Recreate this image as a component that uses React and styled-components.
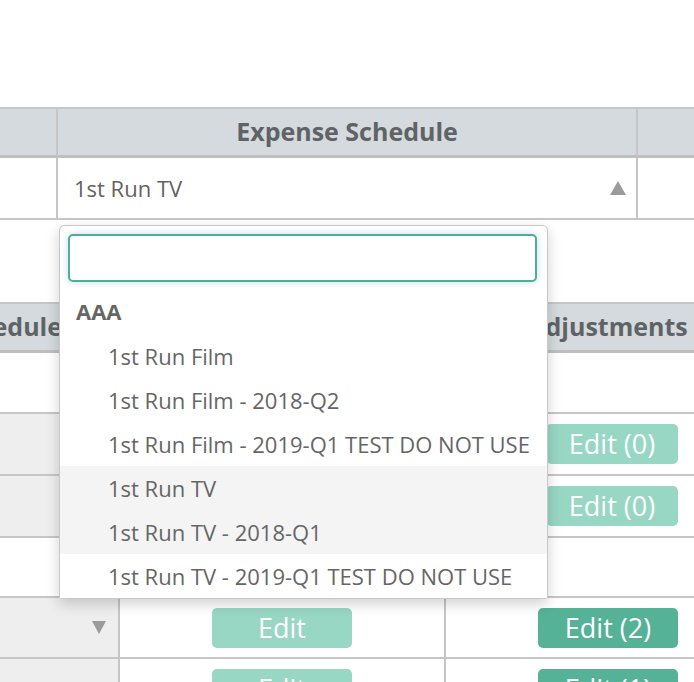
import styled, {createGlobalStyle} from 'styled-components';

const Global = createGlobalStyle`
    html, body {
        margin: 0;
        padding: 0;
        background: #fff;
        overflow: hidden;
    }
    body {
        font-family: "Open Sans", "Noto Sans", sans-serif;
        color: #636363;
    }
    * {
        box-sizing: border-box;
    }
`;

const line = '#c6c6c6';

export default function App() {
    const groups = [
        {label: 'AAA', items: [
            '1st Run Film',
            '1st Run Film - 2018-Q2',
            '1st Run Film - 2019-Q1 TEST DO NOT USE',
            '1st Run TV',
            '1st Run TV - 2018-Q1',
            '1st Run TV - 2019-Q1 TEST DO NOT USE',
        ]},
    ];
    const highlighted = ['1st Run TV', '1st Run TV - 2018-Q1'];

    return (
        <Page>
            <Global />
            <Grid $cols="58px 580px 120px" $top={106}>
                <HeadCell />
                <HeadCell>Expense Schedule</HeadCell>
                <HeadCell $last />
                <Cell $h={62} />
                <Cell $h={62}>
                    <SelectBox>
                        <span>1st Run TV</span>
                        <Arrow width="16" height="14" viewBox="0 0 16 14">
                            <polygon points="8,0 16,14 0,14" />
                        </Arrow>
                    </SelectBox>
                </Cell>
                <Cell $h={62} $last />
            </Grid>

            <Grid $cols="120px 326px 324px" $top={82}>
                <HeadCell $align="flex-end" $pr={56}>Expense Schedule</HeadCell>
                <HeadCell>Amortization Schedule</HeadCell>
                <HeadCell $last>Adjustments</HeadCell>

                <Cell $h={61} />
                <Cell $h={61} />
                <Cell $h={61} $last />

                <Cell $h={62} $gray />
                <Cell $h={62} />
                <Cell $h={62} $last $align="flex-end" $pr={92}>
                    <EditButton $w={132}>Edit (0)</EditButton>
                </Cell>

                <Cell $h={62} $gray />
                <Cell $h={62} />
                <Cell $h={62} $last $align="flex-end" $pr={92}>
                    <EditButton $w={132}>Edit (0)</EditButton>
                </Cell>

                <Cell $h={60} />
                <Cell $h={60} />
                <Cell $h={60} $last />

                <Cell $h={61} $gray $align="flex-end" $pr={12}>
                    <Arrow width="14" height="13" viewBox="0 0 14 13">
                        <polygon points="0,0 14,0 7,13" />
                    </Arrow>
                </Cell>
                <Cell $h={61} $align="center">
                    <EditButton $w={140}>Edit</EditButton>
                </Cell>
                <Cell $h={61} $last $align="flex-end" $pr={92}>
                    <EditButton $w={140} $dark>Edit (2)</EditButton>
                </Cell>

                <Cell $h={62} $gray />
                <Cell $h={62} $align="center">
                    <EditButton $w={140}>Edit</EditButton>
                </Cell>
                <Cell $h={62} $last $align="flex-end" $pr={92}>
                    <EditButton $w={140} $dark>Edit (1)</EditButton>
                </Cell>
            </Grid>

            <Dropdown>
                <Search autoFocus />
                {groups.map((group) => (
                    <div key={group.label}>
                        <GroupLabel>{group.label}</GroupLabel>
                        {group.items.map((item) => (
                            <Option key={item} $active={highlighted.includes(item)}>{item}</Option>
                        ))}
                    </div>
                ))}
            </Dropdown>
        </Page>
    );
}

const Page = styled.div`
    position: relative;
    width: 694px;
    height: 682px;
    overflow: hidden;
    padding-top: 1px;
`;

const Grid = styled.div`
    display: grid;
    grid-template-columns: ${({$cols}) => $cols};
    margin-top: ${({$top}) => $top}px;
    width: 776px;
`;

const HeadCell = styled.div`
    display: flex;
    align-items: center;
    justify-content: ${({$align}) => $align || 'center'};
    padding-right: ${({$pr}) => $pr || 0}px;
    padding-bottom: 2px;
    height: 51px;
    background: #d4dadd;
    border-top: 2px solid ${line};
    border-bottom: 3px solid #bfbfbf;
    border-right: ${({$last}) => ($last ? 'none' : `2px solid ${line}`)};
    font-size: 25px;
    font-weight: 700;
    color: #5f6366;
    white-space: nowrap;
    overflow: hidden;
`;

const Cell = styled.div`
    display: flex;
    align-items: center;
    justify-content: ${({$align}) => $align || 'flex-start'};
    padding-right: ${({$pr}) => $pr || 0}px;
    height: ${({$h}) => $h}px;
    background: ${({$gray}) => ($gray ? '#eeeeee' : '#fff')};
    border-bottom: 2px solid ${line};
    border-right: ${({$last}) => ($last ? 'none' : `2px solid ${line}`)};
`;

const SelectBox = styled.div`
    display: flex;
    align-items: center;
    justify-content: space-between;
    width: 100%;
    padding: 0 10px 0 16px;
    font-size: 22px;
    color: #636363;
`;

const Arrow = styled.svg`
    display: block;
    fill: #9b9b9b;
`;

const EditButton = styled.button`
    width: ${({$w}) => $w}px;
    height: 40px;
    border: none;
    border-radius: 5px;
    background: ${({$dark}) => ($dark ? '#55b296' : '#98d7c4')};
    color: #fff;
    font-family: "Open Sans", sans-serif;
    font-size: 27px;
    line-height: 40px;
    padding: 0;
`;

const Dropdown = styled.div`
    position: absolute;
    left: 59px;
    top: 225px;
    width: 489px;
    background: #fff;
    border: 1px solid #c8c8c8;
    border-radius: 5px 5px 3px 3px;
    box-shadow: 0 5px 14px rgba(0, 0, 0, 0.18);
    padding-top: 8px;
`;

const Search = styled.input`
    display: block;
    width: 469px;
    height: 48px;
    margin: 0 0 8px 8px;
    border: 2px solid #50ae93;
    border-radius: 5px;
    box-shadow: 0 0 7px rgba(120, 180, 230, 0.45);
    outline: none;
    font-family: "Open Sans", sans-serif;
    font-size: 20px;
    padding: 0 10px;
`;

const GroupLabel = styled.div`
    height: 44px;
    line-height: 42px;
    padding-left: 16px;
    font-size: 22px;
    font-weight: 700;
    color: #666;
`;

const Option = styled.div`
    height: 44px;
    line-height: 44px;
    padding-left: 48px;
    font-size: 22px;
    color: #666;
    white-space: nowrap;
    background: ${({$active}) => ($active ? '#f4f4f4' : '#fff')};
`;
